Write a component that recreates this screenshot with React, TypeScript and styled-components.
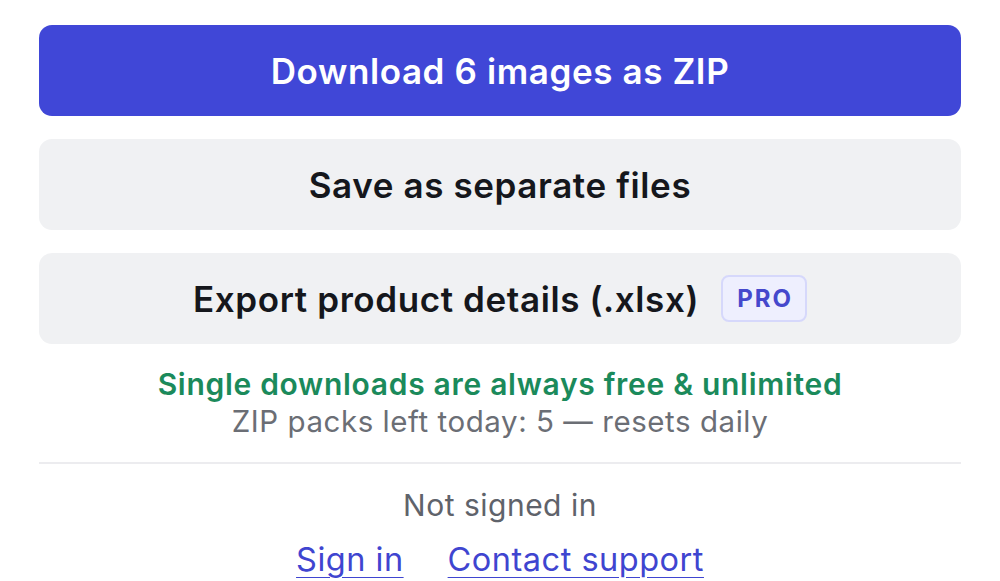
import styled, { createGlobalStyle } from "styled-components";

const GlobalStyle = createGlobalStyle`
  body {
    margin: 0;
    background: #ffffff;
    font-family: Inter, "Noto Sans", sans-serif;
  }
`;

const Popup = styled.div`
  width: 1000px;
  box-sizing: border-box;
  padding: 25px 39px 0;
  display: flex;
  flex-direction: column;
`;

const Actions = styled.div`
  display: flex;
  flex-direction: column;
  gap: 23px;
`;

const ActionButton = styled.button<{ $primary?: boolean }>`
  height: 91px;
  border: none;
  border-radius: 13px;
  display: flex;
  align-items: center;
  justify-content: center;
  gap: 22px;
  font-family: Inter, sans-serif;
  font-size: 35px;
  font-weight: 600;
  letter-spacing: 0.6px;
  cursor: pointer;
  background: ${(p) => (p.$primary ? "#4047d7" : "#f0f1f3")};
  color: ${(p) => (p.$primary ? "#ffffff" : "#15171c")};
`;

const ProBadge = styled.span`
  font-size: 24px;
  line-height: 24px;
  font-weight: 700;
  letter-spacing: 2px;
  color: #4548cc;
  background: #eeeffe;
  border: 2px solid #d6d8fb;
  border-radius: 8px;
  padding: 10px 12px 9px 14px;
`;

const Notice = styled.div`
  margin-top: 22px;
  text-align: center;
  font-size: 29.5px;
  line-height: 37px;
  letter-spacing: 0.55px;
`;

const FreeLine = styled.div`
  color: #1b8a5b;
  font-weight: 600;
  font-size: 30px;
  letter-spacing: 0.7px;
`;

const QuotaLine = styled.div`
  color: #6b6e75;
`;

const Divider = styled.hr`
  margin: 22px 0 0;
  border: none;
  border-top: 2px solid #ececef;
`;

const Account = styled.div`
  margin-top: 24px;
  display: flex;
  flex-direction: column;
  align-items: center;
  gap: 20px;
`;

const Status = styled.div`
  font-size: 30px;
  line-height: 34px;
  letter-spacing: 0.5px;
  color: #5f636b;
`;

const Links = styled.div`
  display: flex;
  gap: 44px;
  line-height: 36px;
`;

const Link = styled.a`
  font-size: 32.5px;
  letter-spacing: 0.5px;
  color: #3f45d0;
  text-decoration: underline;
  text-underline-offset: 6px;
  text-decoration-thickness: 2px;
`;

export default function App() {
  return (
    <>
      <GlobalStyle />
      <Popup>
        <Actions>
          <ActionButton $primary>Download 6 images as ZIP</ActionButton>
          <ActionButton>Save as separate files</ActionButton>
          <ActionButton>
            Export product details (.xlsx)
            <ProBadge>PRO</ProBadge>
          </ActionButton>
        </Actions>
        <Notice>
          <FreeLine>Single downloads are always free &amp; unlimited</FreeLine>
          <QuotaLine>ZIP packs left today: 5 — resets daily</QuotaLine>
        </Notice>
        <Divider />
        <Account>
          <Status>Not signed in</Status>
          <Links>
            <Link href="#">Sign in</Link>
            <Link href="#">Contact support</Link>
          </Links>
        </Account>
      </Popup>
    </>
  );
}
